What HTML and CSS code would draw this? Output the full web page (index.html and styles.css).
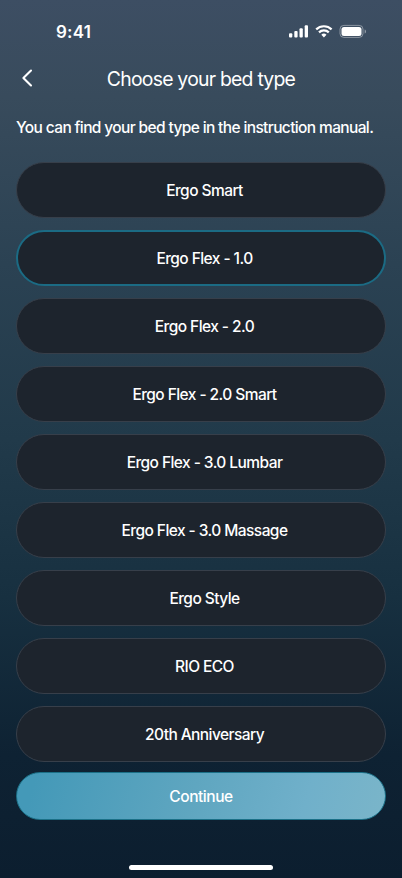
FILE: index.html
```html
<!DOCTYPE html>
<html lang="en">
<head>
<meta charset="utf-8">
<meta name="viewport" content="width=device-width, initial-scale=1">
<title>Choose your bed type</title>
<link rel="stylesheet" href="styles.css">
</head>
<body>
<div class="screen">
  <div class="status">
    <span class="time">9:41</span>
    <svg class="indicators" width="80" height="16" viewBox="0 0 80 16" fill="#fff" aria-hidden="true">
      <rect x="1" y="9.2" width="3.3" height="4.2" rx="1"/>
      <rect x="6.3" y="6.9" width="3.3" height="6.5" rx="1"/>
      <rect x="11.5" y="4.2" width="3.3" height="9.2" rx="1"/>
      <rect x="16.7" y="1.3" width="3.3" height="12.1" rx="1"/>
      <g fill="none" stroke="#fff" stroke-width="2.2">
        <path d="M28.2 5.4a11 11 0 0 1 15.4 0"/>
        <path d="M31 8.4a7 7 0 0 1 9.8 0"/>
      </g>
      <path d="M33.3 10.7a3.8 3.8 0 0 1 5.2 0L35.9 13.5z"/>
      <rect x="52" y="1.4" width="23" height="12" rx="3.8" fill="none" stroke="#fff" stroke-opacity=".4"/>
      <path d="M76.7 5.5v4c.8-.3 1.3-1.1 1.3-2s-.5-1.7-1.3-2z" fill-opacity=".45"/>
      <rect x="53.5" y="2.9" width="20" height="9" rx="2.5"/>
    </svg>
  </div>
  <header class="nav">
    <svg class="back" width="12" height="18" viewBox="0 0 12 18" fill="none" stroke="#fff" stroke-width="2.1" stroke-linecap="round" stroke-linejoin="round" aria-label="Back"><path d="M10 1.6 2.4 9l7.6 7.4"/></svg>
    <h1>Choose your bed type</h1>
  </header>
  <p class="hint">You can find your bed type in the instruction manual.</p>
  <main class="options">
    <button class="option">Ergo Smart</button>
    <button class="option selected">Ergo Flex - 1.0</button>
    <button class="option">Ergo Flex - 2.0</button>
    <button class="option">Ergo Flex - 2.0 Smart</button>
    <button class="option">Ergo Flex - 3.0 Lumbar</button>
    <button class="option">Ergo Flex - 3.0 Massage</button>
    <button class="option">Ergo Style</button>
    <button class="option">RIO ECO</button>
    <button class="option">20th Anniversary</button>
  </main>
  <button class="continue">Continue</button>
  <div class="home"></div>
</div>
</body>
</html>
```
FILE: styles.css
```css
* { box-sizing: border-box; }
body { margin: 0; background: #0c1e2f; }
.screen {
  width: 402px;
  height: 878px;
  padding: 0 16px;
  display: flex;
  flex-direction: column;
  overflow: hidden;
  color: #fff;
  font-family: Inter, "Liberation Sans", sans-serif;
  font-size: 15.5px;
  font-weight: 450;
  letter-spacing: -0.57px;
  background: linear-gradient(180deg, #3d4e63 0%, #384b5c 11%, #2b4253 30%, #213a4a 50%, #173040 68%, #0e2233 86%, #0c1e2f 100%);
}
.status {
  height: 56px;
  padding: 8px 2px 0 40px;
  display: flex;
  align-items: center;
  justify-content: space-between;
}
.time { font-size: 17px; font-weight: 580; letter-spacing: 0.25px; }
.indicators { margin-right: 16px; }
.nav {
  height: 44px;
  display: grid;
  grid-template-columns: 24px 1fr 24px;
  align-items: center;
}
.back { margin-left: 5px; }
h1 { margin: 0; padding-top: 1px; font-size: 19.4px; font-weight: 430; letter-spacing: -0.76px; text-align: center; }
.hint { margin: 18px 0 24px; line-height: 20px; letter-spacing: -0.63px; white-space: nowrap; }
.options { display: grid; gap: 12px; }
button {
  width: 100%;
  color: inherit;
  font: inherit;
  letter-spacing: inherit;
  border: 1px solid #373f4a;
  border-radius: 28px;
}
.option { height: 56px; padding: 1px 0 0 7px; background: #1d242d; }
.selected { border: 2px solid #1b6b84; }
.continue {
  flex: none;
  height: 48px;
  margin-top: 10px;
  padding: 1px 0 0;
  border-radius: 24px;
  border-color: #1b7087;
  letter-spacing: -0.45px;
  background: linear-gradient(105deg, #4499b8 5%, #5fa6c0 48%, #70b0ca 78%, #7ab5c9 100%);
}
.home { width: 144px; height: 5px; margin: 45px auto 0; border-radius: 3px; background: #fff; }
```
